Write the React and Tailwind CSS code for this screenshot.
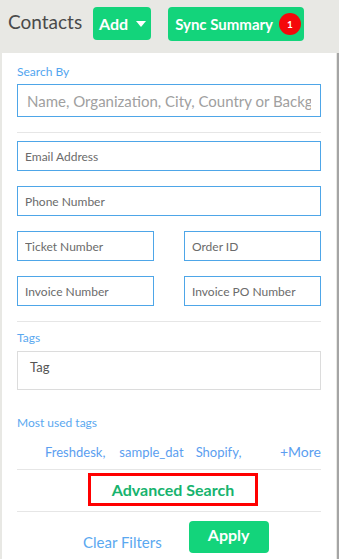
import { useState } from 'react';

function Field({ placeholder, className = '' }) {
    return (
        <input
            placeholder={placeholder}
            className={`h-[30px] border border-[#4ea6e8] px-[7px] text-[12px] text-[#555] placeholder:text-[#6b6b6b] outline-none ${className}`}
        />
    );
}

export default function App() {
    const [count] = useState(1);
    const tags = ['Freshdesk,', 'sample_dat', 'Shopify,'];

    return (
        <div className="flex h-[559px] w-[339px] flex-col overflow-hidden bg-[#e8e8e4] font-['Lato','Noto_Sans',sans-serif]">
            <header className="flex h-[53px] shrink-0 items-start pl-[8px] pt-[7px]">
                <span className="mt-[3px] text-[19px] leading-[24px] text-[#4a4a4a]">Contacts</span>
                <button className="ml-[11px] flex h-[33px] w-[58px] items-center justify-center gap-[8px] rounded-[4px] bg-[#13d47b] pl-[1px] text-[16px] font-bold text-white">
                    Add
                    <svg width="10" height="6" viewBox="0 0 10 6"><path d="M0 0h10L5 6z" fill="white" /></svg>
                </button>
                <button className="ml-[17px] flex h-[34px] w-[136px] items-center gap-[6px] rounded-[4px] bg-[#13d47b] pl-[7px] text-[15px] font-bold text-white">
                    Sync Summary
                    <span className="flex h-[22px] w-[22px] items-center justify-center rounded-full bg-[#f5080a] text-[10px] font-bold">{count}</span>
                </button>
            </header>
            <div className="flex min-h-0 flex-1">
                <div className="ml-[2px] flex w-[334px] flex-col bg-white px-[15px]">
                    <label className="mt-[11px] text-[12px] leading-[16px] text-[#52a5ef]">Search By</label>
                    <input
                        placeholder="Name, Organization, City, Country or Background"
                        className="mt-[4px] h-[33px] w-full border border-[#4ea6e8] px-[9px] text-[15px] placeholder:text-[#a0a0a0] outline-none"
                    />
                    <div className="mt-[15px] h-px bg-[#e6e6e6]" />
                    <Field placeholder="Email Address" className="mt-[8px] w-full" />
                    <Field placeholder="Phone Number" className="mt-[15px] w-full" />
                    <div className="mt-[15px] flex justify-between">
                        <Field placeholder="Ticket Number" className="w-[137px]" />
                        <Field placeholder="Order ID" className="w-[137px]" />
                    </div>
                    <div className="mt-[15px] flex justify-between">
                        <Field placeholder="Invoice Number" className="w-[137px]" />
                        <Field placeholder="Invoice PO Number" className="w-[137px]" />
                    </div>
                    <div className="mt-[15px] h-px bg-[#e6e6e6]" />
                    <label className="mt-[8px] text-[12px] leading-[16px] text-[#5aa8f0]">Tags</label>
                    <div className="mt-[5px] flex h-[39px] items-center border border-[#dcdcdc] pb-[5px] pl-[12px] text-[13px] text-[#555]">Tag</div>
                    <label className="mt-[25px] text-[12px] leading-[16px] text-[#5aa8f0]">Most used tags</label>
                    <div className="mt-[13px] flex items-center pl-[28px] text-[13px] leading-[16px] text-[#5b9ef0]">
                        <span>{tags[0]}</span>
                        <span className="ml-[14px]">{tags[1]}</span>
                        <span className="ml-[12px]">{tags[2]}</span>
                        <span className="ml-auto text-[14px]">+More</span>
                    </div>
                    <div className="mt-[9px] h-px bg-[#e6e6e6]" />
                    <div className="flex">
                        <button className="mt-[3px] ml-[71px] h-[33px] w-[170px] border-[3px] border-[#f00] text-[16px] font-bold text-[#17b36e]">Advanced Search</button>
                    </div>
                    <div className="mt-[5px] h-px bg-[#e6e6e6]" />
                    <div className="mt-[8px] flex items-center">
                        <button className="ml-[66px] mt-[11px] text-[15px] text-[#5aa8f0]">Clear Filters</button>
                        <button className="ml-[27px] h-[32px] w-[80px] rounded-[4px] bg-[#13d47b] pb-[4px] text-[16px] font-bold text-white">Apply</button>
                    </div>
                </div>
                <div className="w-px bg-[#e8e8e4]" />
                <div className="w-[2px] bg-[#a5a5a5]" />
            </div>
        </div>
    );
}
